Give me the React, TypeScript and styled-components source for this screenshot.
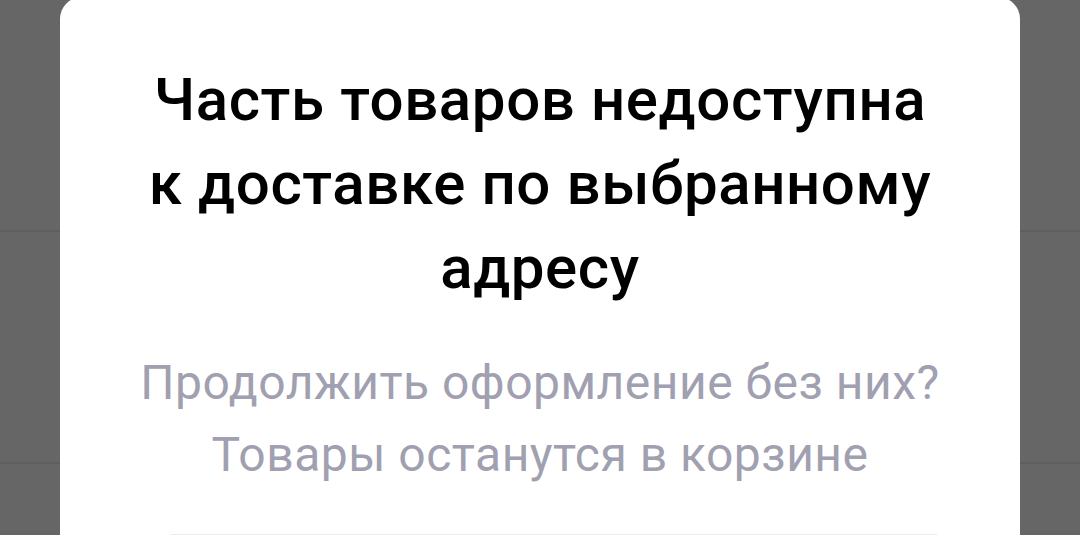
import React from "react";
import styled, { createGlobalStyle } from "styled-components";

const GlobalStyle = createGlobalStyle`
  html, body {
    margin: 0;
    padding: 0;
    background: #ffffff;
    font-family: "Roboto", "Noto Sans", sans-serif;
  }
`;

const CART_ROWS = ["row-1", "row-2", "row-3"];

const App: React.FC = () => {
  return (
    <Screen>
      <GlobalStyle />

      {/* cart list underneath the overlay */}
      <CartList>
        {CART_ROWS.map((id) => (
          <CartRow key={id} />
        ))}
      </CartList>

      <Backdrop>
        <Sheet role="dialog" aria-modal="true">
          <Title>
            Часть товаров недоступна
            <br />к доставке по выбранному
            <br />
            адресу
          </Title>
          <Message>
            Продолжить оформление без них?
            <br />
            Товары останутся в корзине
          </Message>
          <Actions>
            <SecondaryButton type="button" aria-label="Вернуться в корзину" />
          </Actions>
        </Sheet>
      </Backdrop>
    </Screen>
  );
};

export default App;

const Screen = styled.div`
  position: relative;
  width: 1080px;
  height: 535px;
  overflow: hidden;
  background: #ffffff;
`;

const CartList = styled.div`
  display: flex;
  flex-direction: column;
`;

const CartRow = styled.div`
  height: 230px;
  border-bottom: 2px solid #ebebeb;
`;

const Backdrop = styled.div`
  position: absolute;
  inset: 0;
  display: flex;
  justify-content: center;
  align-items: flex-start;
  background: rgba(0, 0, 0, 0.6);
`;

const Sheet = styled.div`
  width: 960px;
  margin-top: -3px;
  padding-top: 61px;
  background: #ffffff;
  border-radius: 22px 22px 0 0;
  display: flex;
  flex-direction: column;
  align-items: center;
`;

const Title = styled.h2`
  margin: 0;
  font-family: "Roboto", "Noto Sans", sans-serif;
  font-weight: 500;
  font-size: 60px;
  line-height: 84px;
  color: #000000;
  text-align: center;
  letter-spacing: 0.6px;
`;

const Message = styled.p`
  margin: 37px 0 0;
  font-family: "Roboto", "Noto Sans", sans-serif;
  font-weight: 400;
  font-size: 48px;
  line-height: 72px;
  color: #a0a0b0;
  text-align: center;
  letter-spacing: 0.5px;
`;

const Actions = styled.div`
  align-self: stretch;
  display: flex;
  margin: 43px 72px 0 100px;
`;

const SecondaryButton = styled.button`
  flex: 1;
  height: 96px;
  border: none;
  border-radius: 14px;
  background: #ebebf0;
`;
